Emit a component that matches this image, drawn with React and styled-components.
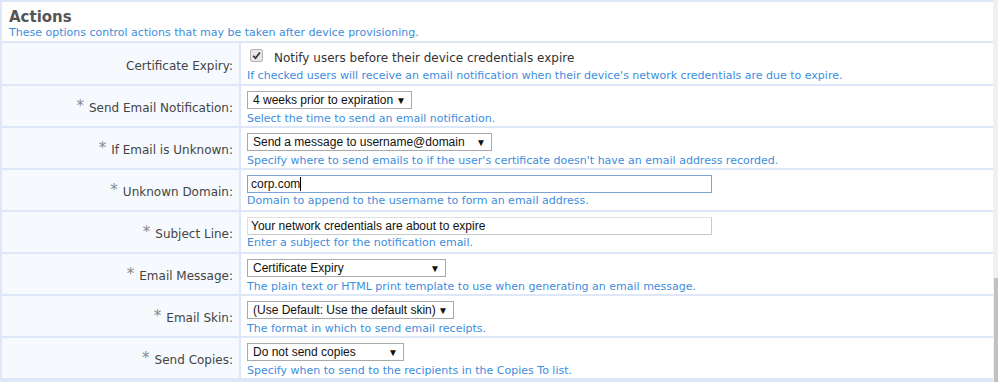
import React from "react";
import styled, { createGlobalStyle } from "styled-components";

const Global = createGlobalStyle`
  html, body { margin: 0; padding: 0; background: #fff; }
  body { font-family: "DejaVu Sans", Verdana, sans-serif; overflow: hidden; }
`;

const Page = styled.div`
  display: flex;
  width: 998px;
  height: 382px;
  overflow: hidden;
`;

const Table = styled.div`
  flex: 1;
  display: flex;
  flex-direction: column;
  gap: 2px;
  padding: 2px 0 0 2px;
  background: #dde7f8;
`;

const Header = styled.div`
  height: 39px;
  background: #fff;
  padding: 7px 0 0 7px;
  box-sizing: border-box;
`;

const Title = styled.div`
  font-size: 15px;
  font-weight: bold;
  color: #555;
  line-height: 17px;
`;

const Subtitle = styled.div`
  font-size: 11px;
  color: #3d8ddd;
  line-height: 14px;
`;

const Row = styled.div`
  display: grid;
  grid-template-columns: 237px 1fr;
  column-gap: 2px;
  height: ${(p) => p.$h || 40}px;
`;

const LabelCell = styled.div`
  background: #f6faff;
  display: flex;
  align-items: center;
  justify-content: flex-end;
  padding-right: 6px;
  padding-top: ${(p) => p.$pt || 4}px;
  box-sizing: border-box;
  font-size: 12px;
  color: #444;
  white-space: nowrap;
`;

const Star = styled.span`
  color: #888;
  font-size: 15px;
  margin-right: 5px;
  position: relative;
  top: -2px;
`;

const ValueCell = styled.div`
  background: #fff;
  padding: ${(p) => p.$pt ?? 5}px 0 0 6px;
  box-sizing: border-box;
  display: flex;
  flex-direction: column;
  align-items: flex-start;
`;

const Help = styled.div`
  font-size: 11px;
  color: #3d8ddd;
  line-height: 14px;
  margin-top: ${(p) => p.$mt ?? 3}px;
  white-space: nowrap;
`;

const CheckLine = styled.div`
  display: flex;
  align-items: center;
  gap: 11px;
  padding-left: 3px;
  height: 17px;
  font-size: 12px;
  color: #333;
`;

const CheckBox = styled.span`
  width: 11px;
  height: 11px;
  border: 1px solid #b5b5b5;
  background: #e6e6e6;
  border-radius: 2px;
  display: inline-flex;
  align-items: center;
  justify-content: center;
  position: relative;
  top: -2px;
`;

const Select = styled.div`
  width: ${(p) => p.$w}px;
  height: 18px;
  box-sizing: border-box;
  border: 1px solid #a9a9a9;
  background: #fff;
  display: flex;
  align-items: center;
  justify-content: space-between;
  padding: 0 5px 0 5px;
  font-family: "Liberation Sans", Arial, sans-serif;
  font-size: 12px;
  color: #111;
  white-space: nowrap;
`;

const Arrow = styled.span`
  font-size: 10px;
  color: #111;
`;

const TextInput = styled.div`
  width: 465px;
  height: 18px;
  box-sizing: border-box;
  border: 1px solid ${(p) => (p.$focus ? "#7ea3d3" : "#c9c9c9")};
  ${(p) => (p.$focus ? "" : "border-top-color: #e0e0e0; border-left-color: #e0e0e0;")}
  background: #fff;
  display: flex;
  align-items: center;
  padding-left: 3px;
  font-family: "Liberation Sans", Arial, sans-serif;
  font-size: 12px;
  color: #111;
  white-space: nowrap;
`;

const Caret = styled.span`
  display: inline-block;
  width: 1px;
  height: 14px;
  background: #000;
`;

const Scrollbar = styled.div`
  width: 5px;
  background: #f1f1f1;
  display: flex;
  flex-direction: column;
`;

const Thumb = styled.div`
  margin-top: 278px;
  flex: 1;
  background: #c1c1c1;
  margin-left: 1px;
`;

const Label = ({ children, req = true }) => (
  <LabelCell>
    {req && <Star>*</Star>}
    {children}
  </LabelCell>
);

const SelectField = ({ w, children }) => (
  <Select $w={w}>
    <span>{children}</span>
    <Arrow>▼</Arrow>
  </Select>
);

const rows = [
  {
    label: "Send Email Notification:",
    control: <SelectField w={165}>4 weeks prior to expiration</SelectField>,
    help: "Select the time to send an email notification.",
  },
  {
    label: "If Email is Unknown:",
    control: <SelectField w={245}>Send a message to username@domain</SelectField>,
    help: "Specify where to send emails to if the user's certificate doesn't have an email address recorded.",
  },
  {
    label: "Unknown Domain:",
    control: (
      <TextInput $focus>
        corp.com<Caret />
      </TextInput>
    ),
    help: "Domain to append to the username to form an email address.",
    mt: 1,
  },
  {
    label: "Subject Line:",
    control: <TextInput>Your network credentials are about to expire</TextInput>,
    help: "Enter a subject for the notification email.",
    mt: 1,
  },
  {
    label: "Email Message:",
    control: <SelectField w={199}>Certificate Expiry</SelectField>,
    help: "The plain text or HTML print template to use when generating an email message.",
  },
  {
    label: "Email Skin:",
    control: <SelectField w={207}>(Use Default: Use the default skin)</SelectField>,
    help: "The format in which to send email receipts.",
  },
  {
    label: "Send Copies:",
    control: <SelectField w={157}>Do not send copies</SelectField>,
    help: "Specify when to send to the recipients in the Copies To list.",
  },
];

export default function App() {
  return (
    <Page>
      <Global />
      <Table>
        <Header>
          <Title>Actions</Title>
          <Subtitle>These options control actions that may be taken after device provisioning.</Subtitle>
        </Header>
        <Row $h={41}>
          <Label req={false}>Certificate Expiry:</Label>
          <ValueCell $pt={6}>
            <CheckLine>
              <CheckBox>
                <svg width="9" height="9" viewBox="0 0 9 9">
                  <path d="M1.2 4.8 L3.5 7.2 L7.9 1.5" fill="none" stroke="#333" strokeWidth="1.7" />
                </svg>
              </CheckBox>
              Notify users before their device credentials expire
            </CheckLine>
            <Help $mt={3}>
              If checked users will receive an email notification when their device's network credentials are due to expire.
            </Help>
          </ValueCell>
        </Row>
        {rows.map((r) => (
          <Row key={r.label}>
            <Label>{r.label}</Label>
            <ValueCell>
              {r.control}
              <Help $mt={r.mt}>{r.help}</Help>
            </ValueCell>
          </Row>
        ))}
      </Table>
      <Scrollbar>
        <Thumb />
      </Scrollbar>
    </Page>
  );
}
